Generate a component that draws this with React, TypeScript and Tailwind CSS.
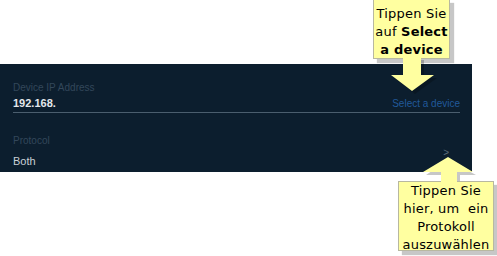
import React from 'react';

// Callout box (yellow note with shadow)
const Note: React.FC<{ className: string; children: React.ReactNode }> = ({ className, children }) => (
  <div
    className={
      'absolute bg-[#ffffa0] border border-[#b8b8a0] shadow-[4px_4px_1px_rgba(0,0,0,0.22)] text-center text-black text-[13px] leading-[18px] tracking-[0.2px] ' +
      className
    }
    style={{ fontFamily: '"DejaVu Sans", Verdana, sans-serif' }}
  >
    {children}
  </div>
);

const App: React.FC = () => {
  return (
    <div className="relative w-[497px] h-[256px] bg-white overflow-hidden" style={{ fontFamily: '"Liberation Sans", Arial, sans-serif' }}>
      <div className="h-[64px]" />

      {/* Dark settings panel */}
      <div className="w-[472px] h-[108px] bg-[#0c1e2e] pl-[13px] pr-[12px] pt-[18px]">
        <div className="text-[10px] leading-[12px] text-[#33475a]">Device IP Address</div>
        <div className="mt-[3px] flex items-end justify-between border-b border-[#4b5e6e] pb-[2px]">
          <span className="text-[11px] leading-[13px] font-semibold text-[#e4e8ec]">192.168.</span>
          <span className="text-[10px] leading-[13px] text-[#21599a]">Select a device</span>
        </div>
        <div className="mt-[22px] text-[10px] leading-[12px] text-[#33475a]">Protocol</div>
        <div className="flex items-start justify-between">
          <span className="mt-[8px] text-[11px] leading-[13px] text-[#c9d0d6]">Both</span>
          <span className="mr-[11px] text-[10px] leading-[12px] text-[#5c6b79]">&gt;</span>
        </div>
      </div>

      {/* arrow shadows, below the notes */}
      <svg className="absolute inset-0 pointer-events-none" width="497" height="256">
        <polygon points="406,60 424,60 424,78 437,78 415,94 394,78 406,78" fill="rgba(0,0,0,0.22)" />
        <polygon points="448,160 476,175 460,175 460,184 445,184 445,175 426,175" fill="rgba(0,0,0,0.22)" />
      </svg>

      <Note className="left-[373px] top-[-1px] w-[77px] h-[60px] pt-[5px]">
        Tippen Sie
        <br />
        auf <b>Select</b>
        <br />
        <b>a device</b>
      </Note>

      <Note className="left-[398px] top-[181px] w-[96px] h-[70px] leading-[17.5px]">
        Tippen Sie
        <br />
        hier, um&nbsp; ein
        <br />
        Protokoll
        <br />
        auszuwählen
      </Note>

      {/* yellow arrows, drawn over the note borders so they join */}
      <svg className="absolute inset-0 pointer-events-none" width="497" height="256">
        <polygon points="403,58 421,58 421,75 434,75 412,91 391,75 403,75" fill="#ffffa0" />
        <polygon points="448,157 473,172 457,172 457,182 441,182 441,172 423,172" fill="#ffffa0" />
      </svg>
    </div>
  );
};

export default App;
